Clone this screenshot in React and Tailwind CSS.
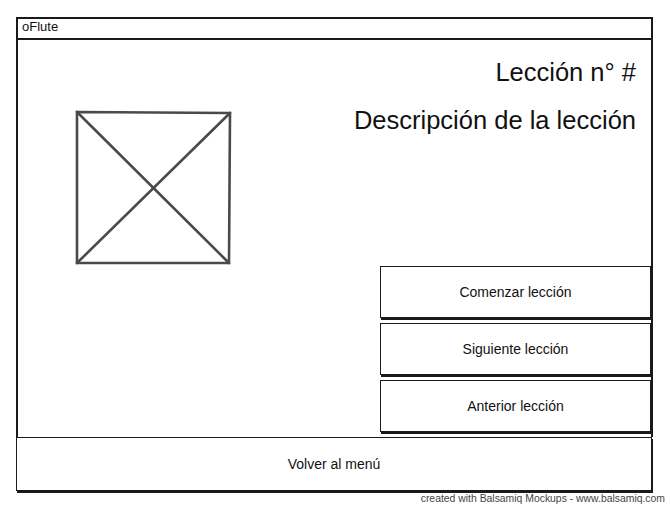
import React from 'react';

const font = { fontFamily: '"Liberation Sans", Arial, sans-serif' };

function Placeholder() {
  return (
    <svg width="158" height="156" viewBox="0 0 158 156" className="block">
      <g stroke="#4a4a4a" strokeWidth="2.6" fill="none" strokeLinecap="round">
        <path d="M2 2 L155 3 L154 153 L2 153 Z" />
        <path d="M2 2 L154 153" />
        <path d="M155 3 L2 153" />
      </g>
    </svg>
  );
}

function SketchButton({ children, className }) {
  return (
    <button
      className={
        'flex items-center justify-center bg-white border-[1.5px] border-[#1a1a1a] shadow-[1px_2px_0_#1a1a1a] text-[14px] text-[#111] ' +
        (className || '')
      }
    >
      {children}
    </button>
  );
}

export default function App() {
  return (
    <div className="w-[670px] h-[510px] bg-white relative overflow-hidden" style={font}>
      <div className="pt-[17px] pl-[16px]">
        <div className="w-[637px] border-l-2 border-t-2 border-r-2 border-[#1a1a1a]">
          <div className="h-[21px] border-b-2 border-[#1a1a1a] flex items-center pl-[4px] pb-[3px] text-[13px] text-[#111]">
            oFlute
          </div>
          <div className="flex h-[397px]">
            <div className="pl-[57px] pt-[70px]">
              <Placeholder />
            </div>
            <div className="flex-1 flex flex-col items-end">
              <div className="pr-[15px] pt-[18px] flex flex-col items-end gap-[20px] text-[25.5px] leading-[28px] text-[#111]">
                <div>Lección n° #</div>
                <div>Descripción de la lección</div>
              </div>
              <div className="mt-auto mb-[5px] flex flex-col gap-[5px]">
                <SketchButton className="w-[271px] h-[52px]">Comenzar lección</SketchButton>
                <SketchButton className="w-[271px] h-[52px]">Siguiente lección</SketchButton>
                <SketchButton className="w-[271px] h-[52px]">Anterior lección</SketchButton>
              </div>
            </div>
          </div>
        </div>
        <SketchButton className="w-[636px] h-[54px]">Volver al menú</SketchButton>
      </div>
      <div className="absolute right-[5px] top-[491px] text-[10.4px] text-[#444]">
        created with Balsamiq Mockups - www.balsamiq.com
      </div>
    </div>
  );
}
